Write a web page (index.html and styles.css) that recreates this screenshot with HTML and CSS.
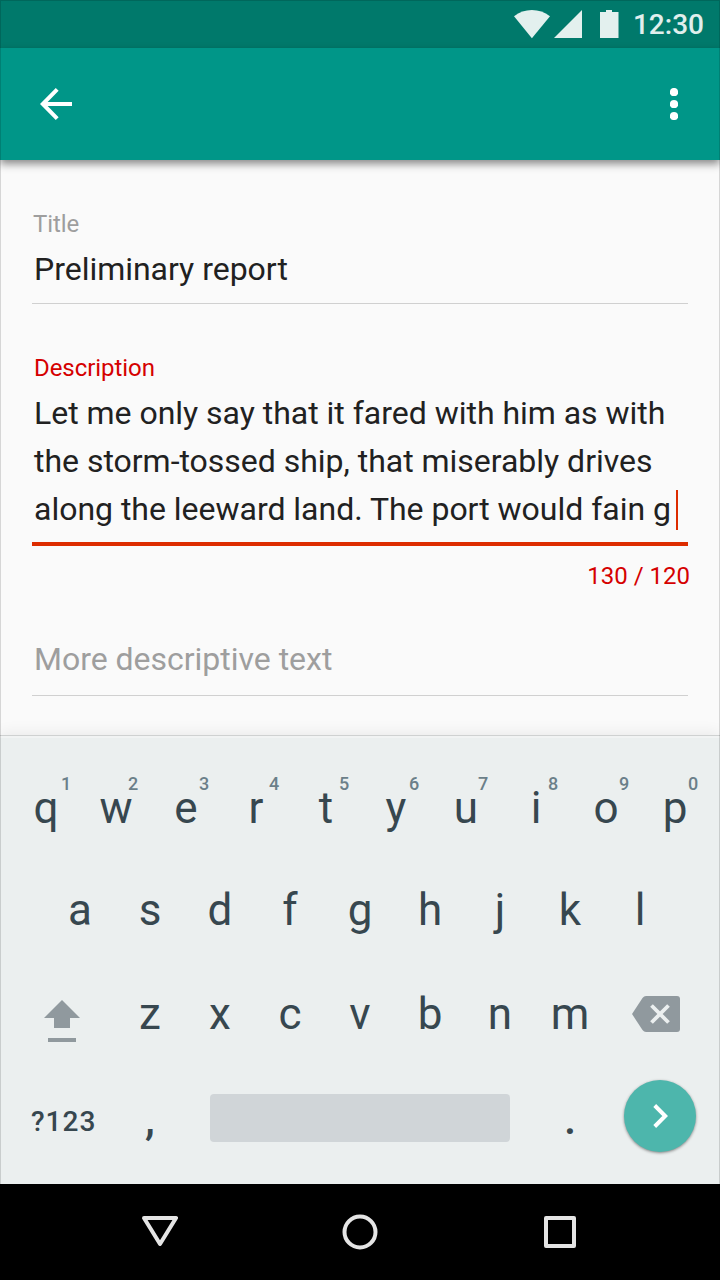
FILE: index.html
```html
<!DOCTYPE html>
<html lang="en">
<head>
<meta charset="utf-8">
<title>Preliminary report</title>
<link rel="stylesheet" href="styles.css">
</head>
<body>
<div class="phone">
  <div class="status-bar">
    <svg class="status-icons" width="106" height="30" viewBox="0 0 106 30">
      <path d="M0 6.200Q8 0 17.900 0T36 6.200L17.900 28.300Z"/>
      <path d="M68 0V28H40Z"/>
      <path d="M86 2h6V0h6v2h6.500v26H86Z"/>
    </svg>
    <span class="clock">12:30</span>
  </div>
  <header class="app-bar">
    <svg width="32" height="32" viewBox="0 0 32 32"><path class="back" d="M32 16H3M17.200 1.400L2.800 16l14.400 14.600"/></svg>
    <svg width="8" height="32" viewBox="0 0 8 32" fill="#fff"><circle cx="4" cy="4" r="4.100"/><circle cx="4" cy="16" r="4.100"/><circle cx="4" cy="28" r="4.100"/></svg>
  </header>
  <main class="form">
    <section class="field title-field">
      <label class="label">Title</label>
      <div class="value">Preliminary report</div>
    </section>
    <section class="field description-field">
      <label class="label">Description</label>
      <div class="value">Let me only say that it fared with him as with<br>the storm-tossed ship, that miserably drives<br>along the leeward land. The port would fain g<span class="cursor"></span></div>
    </section>
    <div class="counter">130 / 120</div>
    <section class="field more-field"><div class="value">More descriptive text</div></section>
  </main>
  <div class="keyboard">
    <div class="row numbers">
      <div class="key">q<span class="hint first">1</span></div><div class="key">w<span class="hint near">2</span></div><div class="key">e<span class="hint">3</span></div><div class="key">r<span class="hint">4</span></div><div class="key">t<span class="hint">5</span></div><div class="key">y<span class="hint">6</span></div><div class="key">u<span class="hint near">7</span></div><div class="key">i<span class="hint near">8</span></div><div class="key">o<span class="hint">9</span></div><div class="key last">p<span class="hint near">0</span></div>
    </div>
    <div class="row middle">
      <div class="key">a</div><div class="key">s</div><div class="key">d</div><div class="key">f</div><div class="key">g</div><div class="key">h</div><div class="key">j</div><div class="key">k</div><div class="key">l</div>
    </div>
    <div class="row lower">
      <div class="side-key shift"><svg width="36" height="42" viewBox="0 0 36 42" fill="#90999e"><path d="M18 0L36 18H26V28H10V18H0ZM4 38h28v4H4Z"/></svg></div>
      <div class="key">z</div><div class="key">x</div><div class="key">c</div><div class="key">v</div><div class="key">b</div><div class="key">n</div><div class="key">m</div>
      <div class="side-key erase"><svg width="48" height="36" viewBox="0 0 48 36"><path fill="#90999e" d="M14 0H45Q48 0 48 3V33Q48 36 45 36H14Q12 36 10.500 34L0 18L10.500 2Q12 0 14 0Z"/><path fill="none" stroke="#ebefef" stroke-width="3.800" d="M19.500 9.500L36.500 26.500M36.500 9.500L19.500 26.500"/></svg></div>
    </div>
    <div class="row bottom">
      <div class="symbols">?123</div>
      <div class="key comma">,</div>
      <div class="space"></div>
      <div class="key dot">.</div>
      <div class="enter"><svg width="16" height="24" viewBox="0 0 16 24"><path fill="none" stroke="#fff" stroke-width="4" d="M2.700 1.500L13.200 12L2.700 22.500"/></svg></div>
    </div>
  </div>
  <nav class="nav-bar">
    <svg width="36" height="36" viewBox="0 0 36 36"><path d="M2 4L18 30L34 4Z"/></svg>
    <svg width="36" height="36" viewBox="0 0 36 36"><circle cx="18" cy="18" r="15.500"/></svg>
    <svg width="36" height="36" viewBox="0 0 36 36"><path d="M4 4H32V32H4Z"/></svg>
  </nav>
</div>
</body>
</html>
```
FILE: styles.css
```css
* { box-sizing: border-box; }
body { margin: 0; font-family: Roboto, sans-serif; }
svg { display: block; flex: none; }
.phone {
  position: relative;
  display: flex;
  flex-direction: column;
  width: 720px;
  height: 1280px;
  overflow: hidden;
  background: #fafafa;
}
.phone::after {
  content: "";
  position: absolute;
  inset: 0;
  border: 1px solid rgba(0, 0, 0, .14);
  z-index: 5;
}
.status-bar {
  flex: none;
  height: 48px;
  display: flex;
  justify-content: flex-end;
  padding: 10px 16px 0 0;
  gap: 13px;
  background: #00796b;
}
.status-icons { fill: #e3f0ee; }
.clock {
  font-size: 28px;
  line-height: 30px;
  font-weight: 500;
  color: #e0efed;
}
.app-bar {
  flex: none;
  height: 112px;
  display: flex;
  align-items: center;
  justify-content: space-between;
  padding: 0 42px 0 40px;
  background: #009688;
  box-shadow: 0 4px 8px rgba(0, 0, 0, .45);
  z-index: 2;
}
.back { fill: none; stroke: #fff; stroke-width: 4; }
.form {
  flex: none;
  height: 575px;
  padding: 48px 32px 0;
}
.field { border-bottom: 1px solid #d0d0d0; padding-left: 2px; }
.label { display: block; font-size: 24px; line-height: 32px; letter-spacing: -.06px; }
.value {
  font-size: 32px;
  line-height: 48px;
  letter-spacing: -.02px;
  color: #212121;
  white-space: nowrap;
}
.title-field { height: 96px; }
.title-field .label { color: #9e9e9e; margin: 0 0 5px -1px; }
.description-field {
  height: 194px;
  margin-top: 48px;
  border-bottom: 4px solid #dd2c00;
}
.description-field .label { color: #d50000; margin-bottom: 5px; }
.cursor {
  display: inline-block;
  width: 2px;
  height: 40px;
  margin: -10px 0 -10px 5px;
  vertical-align: 0;
  background: #dd2c00;
}
.counter {
  margin-top: 14px;
  margin-right: -2px;
  text-align: right;
  font-size: 24px;
  line-height: 32px;
  color: #d50000;
}
.more-field { margin-top: 43px; height: 61px; }
.more-field .value { color: #9e9e9e; }
.keyboard {
  flex: none;
  position: relative;
  height: 449px;
  padding-top: 42px;
  background: #ebefef;
  border-top: 1px solid #cfd1d1;
  box-shadow: 0 -2px 14px rgba(0, 0, 0, .07), inset 0 2px 0 #f1f3f3;
  color: #37474f;
}
.row { display: flex; height: 60px; }
.numbers { padding-left: 11px; }
.middle { padding-left: 45px; margin-top: 42px; }
.lower { margin-top: 44px; }
.key {
  position: relative;
  width: 70px;
  text-align: center;
  font-size: 44px;
  line-height: 60px;
}
.key.last { margin-left: -1px; }
.hint {
  position: absolute;
  left: 43px;
  top: -6px;
  width: 20px;
  font-size: 18px;
  line-height: 24px;
  font-weight: 500;
  color: #6b7f89;
}
.hint.near { left: 42px; }
.hint.first { left: 45px; }
.last .hint.near { left: 43px; }
.side-key { flex: none; display: flex; }
.shift { width: 115px; padding: 16px 0 0 44px; }
.erase { padding: 12px 0 0 27px; }
.bottom { height: 76px; margin-top: 34px; }
.symbols {
  width: 115px;
  padding-left: 31px;
  font-size: 28px;
  line-height: 88px;
  font-weight: 500;
  letter-spacing: 1px;
}
.comma, .dot { line-height: 82px; font-weight: 500; }
.space { width: 300px; height: 48px; margin: 16px 0 0 25px; border-radius: 4px; background: #d0d5d8; }
.dot { margin-left: 25px; }
.enter {
  width: 72px;
  height: 72px;
  margin: 2px 0 0 19px;
  display: flex;
  align-items: center;
  justify-content: center;
  border-radius: 50%;
  background: #4db6ac;
  box-shadow: 0 1px 3px rgba(0, 0, 0, .45);
}
.nav-bar {
  flex: none;
  height: 96px;
  display: flex;
  align-items: center;
  justify-content: center;
  gap: 164px;
  background: #000;
}
.nav-bar svg { fill: none; stroke: #e5e5e5; stroke-width: 4; stroke-linejoin: round; }
```
